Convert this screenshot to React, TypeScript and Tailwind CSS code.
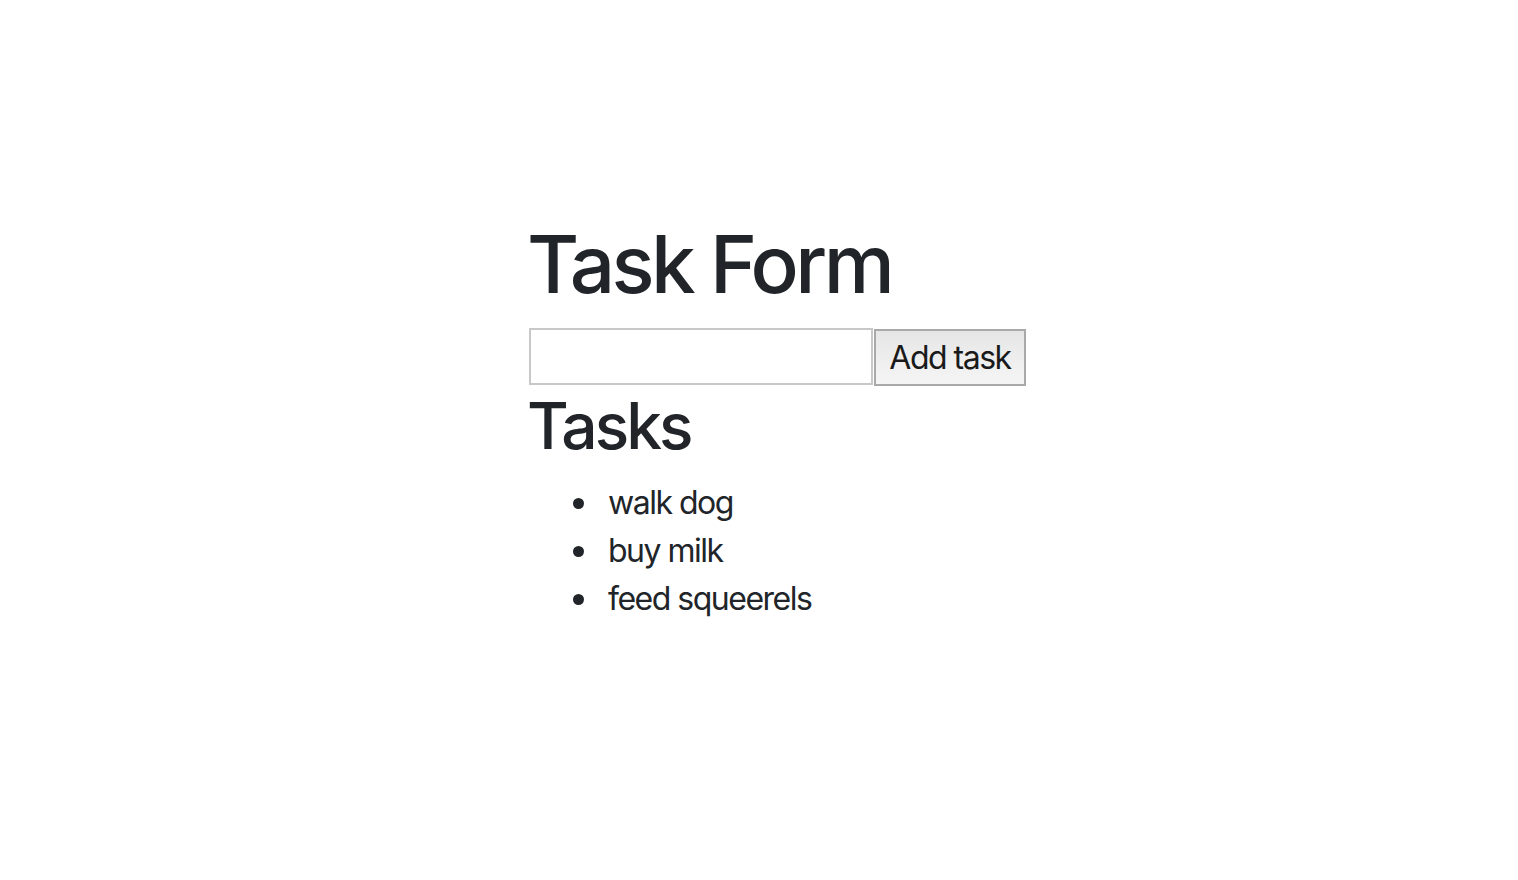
import { useState } from "react";

const initialTasks = ["walk dog", "buy milk", "feed squeerels"];

export default function App() {
    const [tasks, setTasks] = useState(initialTasks);
    const [text, setText] = useState("");

    const addTask = () => {
        if (!text.trim()) return;
        setTasks([...tasks, text.trim()]);
        setText("");
    };

    return (
        <div className="min-h-[880px] bg-white text-[#212529] font-['Inter','Liberation_Sans',sans-serif]">
            <div className="mx-auto w-[460px] pt-[216px]">
                <h1 className="text-[80px] leading-[1.2] font-medium mb-[16px] tracking-[-3.6px] -ml-[2px]">Task Form</h1>
                <div className="flex items-start gap-[1px] w-max">
                    <input
                        value={text}
                        onChange={(e) => setText(e.target.value)}
                        className="w-[344px] h-[57px] border-2 border-[#c8c8c8] bg-white px-2 text-[32px] outline-none shrink-0"
                    />
                    <button
                        onClick={addTask}
                        className="mt-[1px] w-[152px] h-[57px] shrink-0 whitespace-nowrap border-2 border-[#a9a9a9] bg-gradient-to-b from-[#e6e6e6] to-[#f5f5f5] text-[32px] text-[#1a1a1a] leading-none tracking-[-1.5px]"
                    >
                        Add task
                    </button>
                </div>
                <h2 className="mt-[2px] text-[64px] leading-[1.2] font-medium mb-[14px] tracking-[-2.9px] -ml-[2px]">Tasks</h2>
                <ul className="pl-[79px] text-[32px] leading-[48px] tracking-[-1.5px]">
                    {tasks.map((t) => (
                        <li key={t} className="relative">
                            <span className="absolute -left-[35px] top-[19px] w-[11px] h-[11px] rounded-full bg-[#212529]" />
                            {t}
                        </li>
                    ))}
                </ul>
            </div>
        </div>
    );
}
